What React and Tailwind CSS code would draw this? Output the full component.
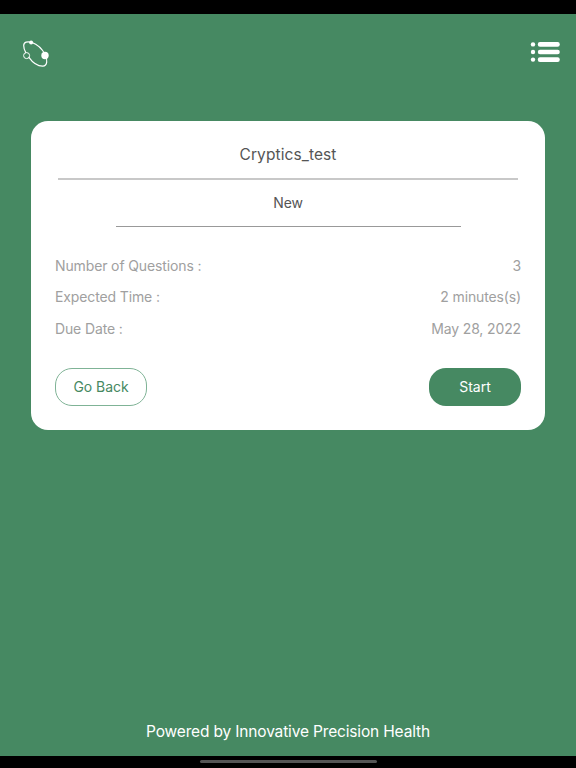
const details = [
  { label: 'Number of Questions :', value: '3' },
  { label: 'Expected Time :', value: '2 minutes(s)' },
  { label: 'Due Date :', value: 'May 28, 2022' },
];

function Logo() {
  return (
    <svg width="28" height="30" viewBox="0 0 28 30" fill="none" stroke="#fff">
      <path d="M9.5 3.3C5.5 2.2 1.8 2.8 1.7 6.6C1.6 9 2.6 11.6 4 14" strokeWidth="1.2" />
      <path d="M9.5 3.3C15 5.2 20 9.5 23.2 15.8C25.6 20.5 25.6 27 20.8 27.2C16 27.3 10.5 23.5 6.7 18.2" strokeWidth="1.2" />
      <circle cx="4.6" cy="16.6" r="3" strokeWidth="1" />
      <circle cx="9.1" cy="3.4" r="2" fill="#fff" stroke="none" />
      <circle cx="23" cy="16.5" r="3.7" fill="#fff" stroke="none" />
    </svg>
  );
}

function MenuIcon() {
  return (
    <svg width="30" height="20" viewBox="0 0 30 20" fill="#fff">
      {[2.4, 10, 17.6].map(y => (
        <g key={y}>
          <circle cx="3" cy={y} r="2.2" />
          <rect x="7.8" y={y - 2.3} width="22" height="4.6" rx="2.2" />
        </g>
      ))}
    </svg>
  );
}

export default function App() {
  return (
    <div className="flex flex-col h-screen bg-[#468962] font-['Inter',sans-serif] overflow-hidden">
      <div className="h-[14px] shrink-0 bg-black" />

      <header className="flex justify-between items-start pt-[25px] pl-[22px] pr-[16px] h-[107px] shrink-0">
        <button aria-label="Home"><Logo /></button>
        <button aria-label="Menu" className="pt-[3px]"><MenuIcon /></button>
      </header>

      <main className="flex-1 px-[31px]">
        <section className="flex flex-col h-[309px] bg-white rounded-[17px] px-6">
          <h1 className="mx-[3px] h-[59px] pt-[22px] text-center text-[15.5px] leading-6 tracking-[0.1px] text-[#555] border-b-2 border-[#c8c8c8]">
            Cryptics_test
          </h1>
          <p className="mx-[60.5px] h-[47px] pt-[13px] text-center text-[14px] leading-5 tracking-[-0.15px] text-[#555] border-b border-[#999]">
            New
          </p>

          {/* Details */}
          <dl className="pt-[29px] text-[14px] leading-5 tracking-[-0.13px] text-[#a0a0a0] space-y-[11.4px]">
            {details.map(d => (
              <div key={d.label} className="flex justify-between">
                <dt>{d.label}</dt>
                <dd>{d.value}</dd>
              </div>
            ))}
          </dl>

          {/* Actions */}
          <div className="flex justify-between mt-auto mb-6 text-[14px] leading-5 tracking-[-0.05px]">
            <button className="w-[92px] h-[38px] pb-px rounded-[17px] border border-[#7fb396] text-[#468962]">
              Go Back
            </button>
            <button className="w-[92px] h-[38px] pb-px rounded-[17px] bg-[#468962] text-white">
              Start
            </button>
          </div>
        </section>
      </main>

      <footer className="h-[36px] shrink-0 text-center text-[15.5px] leading-6 tracking-[-0.16px] text-white">
        Powered by Innovative Precision Health
      </footer>
      <div className="h-[12px] shrink-0 bg-black flex justify-center pt-[4px]">
        <div className="w-[177px] h-[3px] rounded-full bg-[#555]" />
      </div>
    </div>
  );
}
